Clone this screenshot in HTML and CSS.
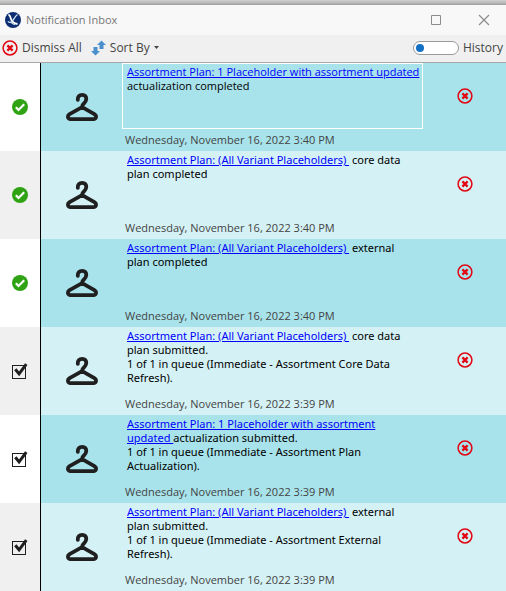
FILE: index.html
```html
<!DOCTYPE html>
<html lang="en">
<head>
<meta charset="utf-8">
<meta name="viewport" content="width=device-width, initial-scale=1">
<title>Notification Inbox</title>
<link rel="stylesheet" href="styles.css">
</head>
<body>
<svg class="defs" aria-hidden="true">
  <symbol id="hanger" viewBox="0 0 32 28"><path d="M11.800 6.800C11.600 3.600 13.400 1.900 16.200 1.900c2.800 0 4.300 1.800 4 4.400-.2 2.600-1.700 3.600-2.900 4.800-.8.800-1.200 1.700-1.200 3.100L3.600 21.200C1 22.800 1.600 26.100 4.600 26.100h22.800c3 0 3.600-3.300 1-4.900L16.100 14.200" fill="none" stroke="#1f1f1f" stroke-width="3.800" stroke-linejoin="round" stroke-linecap="round"/></symbol>
  <symbol id="done" viewBox="0 0 16 16"><circle cx="8" cy="8" r="8" fill="#2fa314"/><path d="M3.800 8.300l2.700 2.700 5.700-5.800" fill="none" stroke="#fff" stroke-width="2.200"/></symbol>
  <symbol id="dismiss" viewBox="0 0 16 16"><circle cx="8" cy="8" r="6.900" fill="none" stroke="#e30613" stroke-width="1.500"/><path d="M5.400 5.400l5.200 5.200M10.600 5.400l-5.200 5.200" stroke="#e30613" stroke-width="2.300"/></symbol>
  <symbol id="tick" viewBox="0 0 18 18"><path d="M4.300 8.200l3.800 4.700 7.200-9.800" fill="none" stroke="#1f1f1f" stroke-width="3"/></symbol>
</svg>
<main class="window">
  <header class="titlebar">
    <svg class="logo" viewBox="0 0 16 16" aria-hidden="true"><circle cx="8" cy="8" r="8" fill="#0c2d72"/><path d="M3.500 2.500c1.500.8 2 2.500 2.500 4.500.6 2.200 2.300 4.200 6.500 5" fill="none" stroke="#fff" stroke-width="1.800"/><path d="M12.500 2.500C9.500 4.500 9 8 6.800 9.800c-1.100.9-3.200.9-3.800-.5M6 10c1 1.800 2.500 2.600 4 2.700" fill="none" stroke="#cfe0f7" stroke-width="1.300"/></svg>
    <h1 class="title">Notification Inbox</h1>
    <button class="winbtn" aria-label="Maximize"><svg viewBox="0 0 12 12"><path d="M1.500 1.500h9v9h-9z" fill="none" stroke="#8c8c8c"/></svg></button>
    <button class="winbtn" aria-label="Close"><svg viewBox="0 0 12 12"><path d="M1 1l10 10M11 1L1 11" stroke="#8c8c8c" stroke-width="1.200"/></svg></button>
  </header>
  <div class="toolbar">
    <button class="tool"><svg class="icon" aria-hidden="true"><use href="#dismiss"/></svg>Dismiss All</button>
    <button class="tool sort"><svg class="arrows" viewBox="0 0 15 16" aria-hidden="true"><path d="M2.500 7h4v4H9l-4.500 4.500L0 11h2.500zM8.500 9h4V5H15L10.500.500 6 5h2.500z" fill="#4a90cc"/></svg>Sort By<svg class="caret" viewBox="0 0 5 3" aria-hidden="true"><path d="M0 0h5L2.500 3z" fill="#444"/></svg></button>
    <label class="history"><input class="switch" type="checkbox" role="switch">History</label>
  </div>
  <ul class="list">
    <li class="row">
      <div class="status"><svg class="icon" role="img" aria-label="Completed"><use href="#done"/></svg></div>
      <svg class="hanger" aria-hidden="true"><use href="#hanger"/></svg>
      <div class="body"><p class="message selected"><a href="#">Assortment Plan: 1 Placeholder with assortment updated</a><br>actualization completed</p><time class="date">Wednesday, November 16, 2022 3:40 PM</time></div>
      <button class="dismiss" aria-label="Dismiss"><svg class="icon"><use href="#dismiss"/></svg></button>
    </li>
    <li class="row">
      <div class="status"><svg class="icon" role="img" aria-label="Completed"><use href="#done"/></svg></div>
      <svg class="hanger" aria-hidden="true"><use href="#hanger"/></svg>
      <div class="body"><p class="message"><a href="#">Assortment Plan: (All Variant Placeholders)&nbsp;</a> core data<br>plan completed</p><time class="date">Wednesday, November 16, 2022 3:40 PM</time></div>
      <button class="dismiss" aria-label="Dismiss"><svg class="icon"><use href="#dismiss"/></svg></button>
    </li>
    <li class="row">
      <div class="status"><svg class="icon" role="img" aria-label="Completed"><use href="#done"/></svg></div>
      <svg class="hanger" aria-hidden="true"><use href="#hanger"/></svg>
      <div class="body"><p class="message"><a href="#">Assortment Plan: (All Variant Placeholders)&nbsp;</a> external<br>plan completed</p><time class="date">Wednesday, November 16, 2022 3:40 PM</time></div>
      <button class="dismiss" aria-label="Dismiss"><svg class="icon"><use href="#dismiss"/></svg></button>
    </li>
    <li class="row">
      <label class="status"><input class="check" type="checkbox" checked aria-label="Submitted"><svg class="tick" aria-hidden="true"><use href="#tick"/></svg></label>
      <svg class="hanger" aria-hidden="true"><use href="#hanger"/></svg>
      <div class="body"><p class="message"><a href="#">Assortment Plan: (All Variant Placeholders)&nbsp;</a> core data<br>plan submitted.<br>1 of 1 in queue (Immediate - Assortment Core Data<br>Refresh).</p><time class="date">Wednesday, November 16, 2022 3:39 PM</time></div>
      <button class="dismiss" aria-label="Dismiss"><svg class="icon"><use href="#dismiss"/></svg></button>
    </li>
    <li class="row">
      <label class="status"><input class="check" type="checkbox" checked aria-label="Submitted"><svg class="tick" aria-hidden="true"><use href="#tick"/></svg></label>
      <svg class="hanger" aria-hidden="true"><use href="#hanger"/></svg>
      <div class="body"><p class="message"><a href="#">Assortment Plan: 1 Placeholder with assortment<br>updated&nbsp;</a>actualization submitted.<br>1 of 1 in queue (Immediate - Assortment Plan<br>Actualization).</p><time class="date">Wednesday, November 16, 2022 3:39 PM</time></div>
      <button class="dismiss" aria-label="Dismiss"><svg class="icon"><use href="#dismiss"/></svg></button>
    </li>
    <li class="row">
      <label class="status"><input class="check" type="checkbox" checked aria-label="Submitted"><svg class="tick" aria-hidden="true"><use href="#tick"/></svg></label>
      <svg class="hanger" aria-hidden="true"><use href="#hanger"/></svg>
      <div class="body"><p class="message"><a href="#">Assortment Plan: (All Variant Placeholders)&nbsp;</a> external<br>plan submitted.<br>1 of 1 in queue (Immediate - Assortment External<br>Refresh).</p><time class="date">Wednesday, November 16, 2022 3:39 PM</time></div>
      <button class="dismiss" aria-label="Dismiss"><svg class="icon"><use href="#dismiss"/></svg></button>
    </li>
  </ul>
</main>
</body>
</html>
```
FILE: styles.css
```css
* { box-sizing: border-box; }
body { margin: 0; font: 12px/16px "Open Sans", "Noto Sans", sans-serif; color: #444; }
button { margin: 0; padding: 0; border: 0; background: none; font: inherit; color: inherit; }
svg { display: block; flex: none; }
.defs { display: none; }
.icon { width: 16px; height: 16px; }
.window { padding-top: 5px; background: linear-gradient(#d0d0d0, #b8b8b8 3px, #9c9c9c 5px, #fff 5px); }

.titlebar { display: flex; align-items: center; height: 30px; padding: 0 16px 0 5px; background: #f8f8f8; }
.logo { width: 16px; height: 16px; }
.title { flex: 1; margin: 0 0 0 5px; font-size: 11px; font-weight: 400; color: #777; }
.winbtn { display: grid; place-items: center; width: 12px; height: 30px; margin-left: 36px; }
.winbtn svg { width: 12px; height: 12px; }

.toolbar { display: flex; align-items: center; height: 28px; padding: 0 3px 2px 2px; background: #f0f0f0; border-bottom: 1px solid #a8a8a8; }
.tool { display: flex; align-items: center; gap: 4px; }
.sort { margin-left: 9px; }
.arrows { width: 15px; height: 16px; }
.caret { width: 5px; height: 3px; }
.history { display: flex; align-items: center; gap: 4px; margin-left: auto; }
.switch { appearance: none; display: flex; align-items: center; width: 46px; height: 14px; margin: 0; padding: 0 2px; border: 1px solid #999; border-radius: 7px; background: #fff; }
.switch::before { content: ""; width: 8px; height: 8px; border-radius: 50%; background: #1370c4; }
.switch:checked { justify-content: flex-end; }

.list { margin: 0; padding: 0; list-style: none; }
.row { display: grid; grid-template-columns: 41px 81px minmax(0, 1fr) 83px; min-height: 88px; background: #a8e3eb; }
.row:nth-child(even) { background: #d4f1f5; }
.status { display: grid; place-items: center; background: #fff; border-right: 1px solid #000; }
.row:nth-child(even) .status { background: #f0f0f0; }
.status > * { grid-area: 1 / 1; }
.check { appearance: none; width: 14px; height: 14px; margin: 2px 2px 0 0; border: 1px solid #1f1f1f; background: transparent; }
.tick { width: 18px; height: 18px; margin: 0 0 2px; }
.check:not(:checked) + .tick { visibility: hidden; }
.hanger { width: 32px; height: 28px; place-self: center; }
.body { display: flex; flex-direction: column; }
.message { min-height: 66px; margin: 0; padding: 1px 4px; border: 1px solid transparent; font-family: "Noto Sans", sans-serif; font-size: 11px; line-height: 14px; color: #000; white-space: nowrap; }
.selected { border-color: #fff; font-family: "Open Sans", sans-serif; }
.message a { color: #00f; }
.date { margin: auto 0 3px 3px; font-size: 11px; line-height: 16px; color: #444; }
.dismiss { align-self: start; justify-self: center; margin-top: 25px; }
```
